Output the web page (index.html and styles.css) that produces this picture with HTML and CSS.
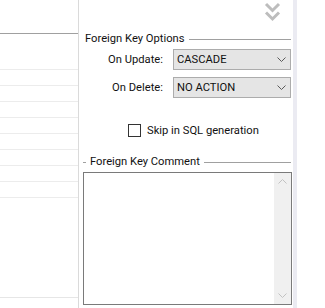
FILE: index.html
```html
<!DOCTYPE html>
<html lang="en">
<head>
    <meta charset="UTF-8">
    <meta name="viewport" content="width=device-width, initial-scale=1.0">
    <title>Foreign Key Options</title>
    <link rel="stylesheet" href="styles.css">
</head>
<body>
    <div class="page">
        <div class="grid-pane">
            <div class="grid">
                <div class="row row-head"></div>
                <div class="row"></div>
                <div class="row"></div>
                <div class="row"></div>
                <div class="row"></div>
                <div class="row"></div>
                <div class="row"></div>
                <div class="row"></div>
                <div class="row"></div>
            </div>
            <div class="grid-foot"></div>
        </div>

        <div class="props">
            <div class="toolbar">
                <!-- collapse panel -->
                <svg class="collapse" width="17" height="20" viewBox="0 0 17 20">
                    <path d="M2 2 L8.5 8.5 L15 2" fill="none" stroke="#bdbdbd" stroke-width="3"/>
                    <path d="M2 10.5 L8.5 17 L15 10.5" fill="none" stroke="#bdbdbd" stroke-width="3"/>
                </svg>
            </div>

            <div class="group-title">
                <span class="group-text">Foreign Key Options</span>
            </div>

            <div class="field">
                <div class="field-label">On Update:</div>
                <div class="combo">
                    <span>CASCADE</span>
                    <svg class="combo-arrow" width="9" height="5" viewBox="0 0 9 5">
                        <path d="M0.5 0.5 L4.5 4.5 L8.5 0.5" fill="none" stroke="#5a5a5a" stroke-width="1"/>
                    </svg>
                </div>
            </div>
            <div class="field">
                <div class="field-label">On Delete:</div>
                <div class="combo">
                    <span>NO ACTION</span>
                    <svg class="combo-arrow" width="9" height="5" viewBox="0 0 9 5">
                        <path d="M0.5 0.5 L4.5 4.5 L8.5 0.5" fill="none" stroke="#5a5a5a" stroke-width="1"/>
                    </svg>
                </div>
            </div>

            <div class="check">
                <span class="check-box"></span>
                <span>Skip in SQL generation</span>
            </div>

            <div class="group-title group-dash">
                <span class="group-text">Foreign Key Comment</span>
            </div>

            <div class="memo">
                <div class="memo-scroll">
                    <svg width="9" height="5" viewBox="0 0 9 5">
                        <path d="M0.5 4.5 L4.5 0.5 L8.5 4.5" fill="none" stroke="#c2c2c2" stroke-width="1"/>
                    </svg>
                    <svg width="9" height="5" viewBox="0 0 9 5">
                        <path d="M0.5 0.5 L4.5 4.5 L8.5 0.5" fill="none" stroke="#c2c2c2" stroke-width="1"/>
                    </svg>
                </div>
            </div>
        </div>

        <div class="gutter"></div>
    </div>
</body>
</html>
```

FILE: styles.css
```css
body {
    margin: 0;
    background: #ffffff;
    font-family: Roboto, "Liberation Sans", Arial, sans-serif;
    font-size: 11.2px;
    color: #111111;
}
.page {
    display: flex;
    height: 308px;
}

/* left grid */
.grid-pane {
    width: 78px;
    border-right: 1px solid #dadada;
    padding-top: 33px;
    display: flex;
    flex-direction: column;
}
.grid {
    border-top: 1px solid #a0a0a0;
}
.row {
    height: 15px;
    border-bottom: 1px solid #ececec;
}
.row-head {
    height: 35px;
}
.grid-foot {
    margin-top: auto;
    margin-bottom: 10px;
    border-top: 1px solid #e6e6e6;
}

/* right properties */
.props {
    width: 209px;
    padding: 0 1px 0 4px;
    display: flex;
    flex-direction: column;
}
.toolbar {
    height: 32px;
    display: flex;
    justify-content: flex-end;
    align-items: flex-start;
}
.collapse {
    margin-top: 2px;
    margin-right: 11px;
}
.group-title {
    height: 14px;
    display: flex;
    align-items: center;
    gap: 4px;
}
.group-title::after {
    content: "";
    flex: 1;
    border-top: 1px solid #a0a0a0;
    margin-right: 1px;
}
.group-text {
    margin-left: 2px;
    line-height: 14px;
}
.group-dash::before {
    content: "";
    width: 3px;
    border-top: 1px solid #a0a0a0;
}
.group-dash .group-text {
    margin-left: 0;
}

.field {
    display: flex;
    align-items: center;
    gap: 10px;
    margin-top: 3px;
    margin-right: 1px;
}
.field + .field {
    margin-top: 7px;
}
.field-label {
    width: 80px;
    text-align: right;
}
.combo {
    flex: 1;
    height: 19px;
    background: #e5e5e5;
    border: 1px solid #acacac;
    display: flex;
    align-items: center;
    justify-content: space-between;
    padding: 0 4px 0 3px;
}

.check {
    display: flex;
    align-items: center;
    gap: 6px;
    margin-top: 26px;
    padding-left: 45px;
    height: 13px;
}
.check-box {
    width: 11px;
    height: 11px;
    border: 1px solid #333333;
    background: #ffffff;
}
.check + .group-title {
    margin-top: 18px;
}

.memo {
    margin-top: 3px;
    height: 131px;
    border: 1px solid #7a7a7a;
    background: #ffffff;
    display: flex;
    justify-content: flex-end;
}
.memo-scroll {
    width: 17px;
    background: #f0f0f0;
    display: flex;
    flex-direction: column;
    justify-content: space-between;
    align-items: center;
    padding: 6px 0 6px;
}

.gutter {
    width: 4px;
    background: #ebebf2;
}
```
